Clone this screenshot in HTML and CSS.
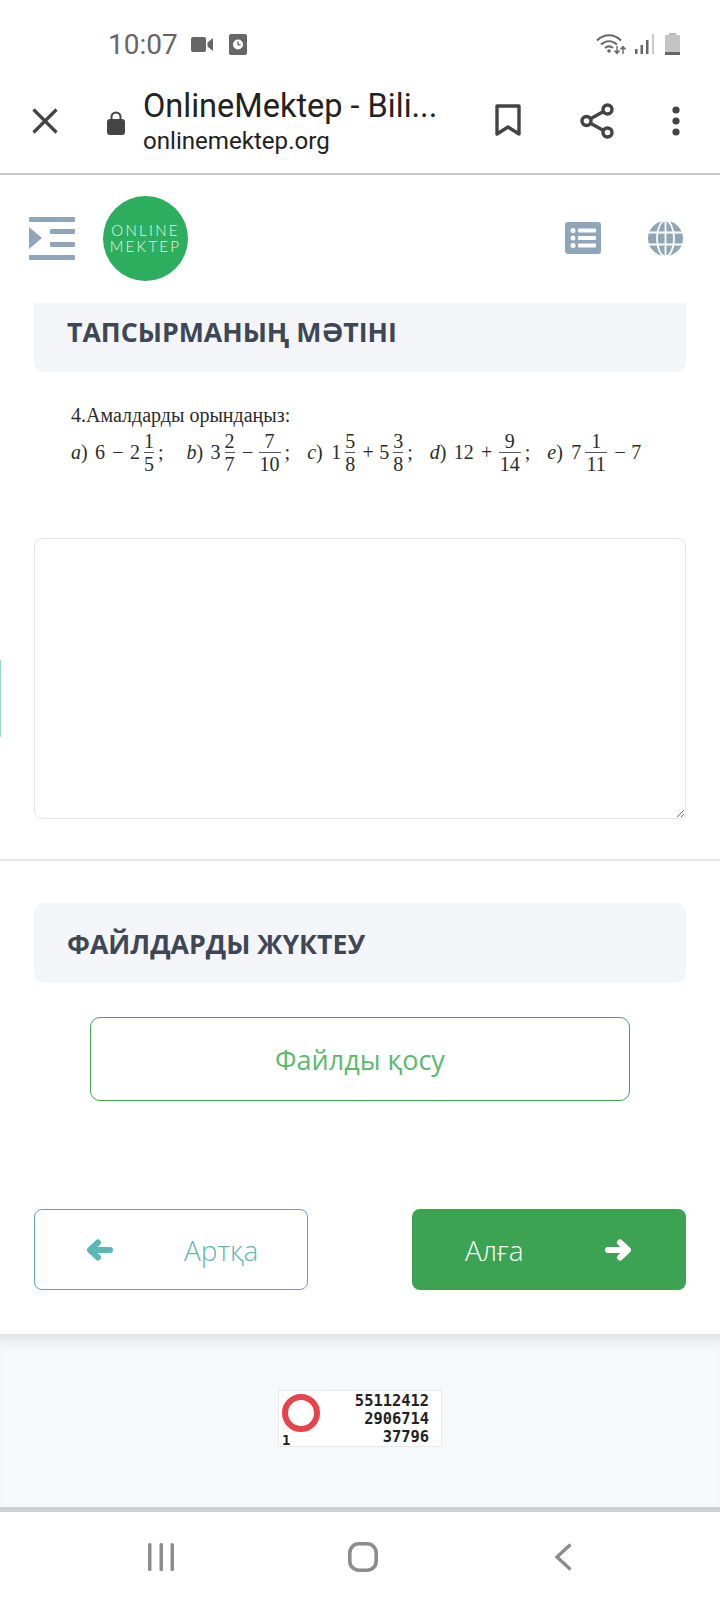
FILE: index.html
```html
<!DOCTYPE html>
<html lang="kk">
<head>
    <meta charset="UTF-8">
    <meta name="viewport" content="width=device-width, initial-scale=1.0">
    <title>OnlineMektep</title>
    <link rel="stylesheet" href="styles.css">
</head>
<body>
<div class="phone">

    <div class="status-bar">
        <div class="status-left">
            <span class="time">10:07</span>
            <svg class="ic-camera" width="22" height="15" viewBox="0 0 22 15"><rect x="0" y="0" width="15" height="15" rx="2" fill="#666"/><path d="M16.5 5.5 22 1v13l-5.500-4.500z" fill="#666"/></svg>
            <svg class="ic-clock" width="18" height="21" viewBox="0 0 18 21"><rect width="18" height="21" rx="2" fill="#666"/><circle cx="9" cy="10.500" r="5" fill="#fff"/><path d="M9 7.500v3.300h2.600" stroke="#666" stroke-width="1.300" fill="none"/></svg>
        </div>
        <div class="status-right">
            <svg width="31" height="22" viewBox="0 0 31 22" fill="none" stroke="#666"><path d="M1 7.500C8 .5 18 .5 25 7.500" stroke-width="2"/><path d="M5 11.500c5-4.500 11-4.500 16 0" stroke-width="2"/><path d="M9 15c2.800-2.300 5.200-2.300 8 0" stroke-width="2"/><circle cx="13" cy="18" r="1.800" fill="#666" stroke="none"/><path d="M21 13v7m-2.500-2.500 2.500 3 2.500-3M27 21v-7m-2.500 2.500 2.500-3 2.500 3" stroke-width="1.400"/></svg>
            <svg width="19" height="20" viewBox="0 0 19 20" fill="#666"><rect x="0" y="15" width="2.500" height="5"/><rect x="5.500" y="11" width="2.500" height="9"/><rect x="11" y="6" width="2.500" height="14"/><rect x="17" y="0" width="2" height="20" fill="#ccc"/></svg>
            <svg class="ic-battery" width="15" height="22" viewBox="0 0 15 22"><rect x="4" y="0" width="7" height="3" fill="#bbb"/><rect x="0" y="2" width="15" height="20" rx="1" fill="#c4c4c4"/><rect x="0" y="19" width="15" height="3" fill="#666"/></svg>
        </div>
    </div>

    <div class="toolbar">
        <svg class="tb-close" width="26" height="26" viewBox="0 0 26 26"><path d="M1.500 1.500l23 23m0-23l-23 23" stroke="#444" stroke-width="3.200" fill="none"/></svg>
        <svg class="tb-lock" width="18" height="24" viewBox="0 0 18 24"><path d="M4.500 9V6a4.500 4.500 0 0 1 9 0v3" stroke="#444" stroke-width="2" fill="none"/><rect y="8" width="18" height="16" rx="3" fill="#444"/></svg>
        <div class="tb-text">
            <div class="tb-title">OnlineMektep - Bili...</div>
            <div class="tb-url">onlinemektep.org</div>
        </div>
        <svg class="tb-bookmark" width="26" height="33" viewBox="0 0 26 33"><path d="M2 2h22v28l-11-7-11 7z" stroke="#444" stroke-width="3.400" fill="none" stroke-linejoin="round"/></svg>
        <svg class="tb-share" width="34" height="36" viewBox="0 0 34 36" fill="none" stroke="#444" stroke-width="3.400"><circle cx="27.500" cy="6.500" r="4.500"/><circle cx="6.500" cy="18" r="4.500"/><circle cx="27.500" cy="29.500" r="4.500"/><path d="M10.500 15.800l13-7.200M10.500 20.200l13 7.200"/></svg>
        <svg class="tb-more" width="10" height="30" viewBox="0 0 10 30" fill="#444"><circle cx="5" cy="4" r="3.600"/><circle cx="5" cy="15" r="3.600"/><circle cx="5" cy="26" r="3.600"/></svg>
    </div>

    <div class="app-header">
        <svg class="menu-icon" width="46" height="43" viewBox="0 0 46 43" fill="#8fa5ba"><rect width="46" height="5" rx="1"/><rect x="21" y="12" width="25" height="5" rx="1"/><rect x="21" y="25" width="25" height="5" rx="1"/><rect y="38" width="46" height="5" rx="1"/><path d="M0 10l13 11L0 32z"/></svg>
        <div class="logo"><span>ONLINE</span><span>MEKTEP</span></div>
        <div class="header-right">
            <svg width="36" height="32" viewBox="0 0 36 32"><rect width="36" height="32" rx="3" fill="#8fa5ba"/><g fill="#fff"><circle cx="8" cy="8.500" r="2.500"/><circle cx="8" cy="16" r="2.500"/><circle cx="8" cy="23.500" r="2.500"/><rect x="13" y="6.500" width="18" height="4" rx="1"/><rect x="13" y="14" width="18" height="4" rx="1"/><rect x="13" y="21.500" width="18" height="4" rx="1"/></g></svg>
            <svg width="35" height="35" viewBox="0 0 35 35"><circle cx="17.500" cy="17.500" r="17.500" fill="#8fa5ba"/><g fill="none" stroke="#fff" stroke-width="1.800"><ellipse cx="17.500" cy="17.500" rx="8.500" ry="18"/><path d="M17.500 0v35M0 11.500h35M0 23.500h35"/></g></svg>
        </div>
    </div>

    <div class="main">
        <div class="section-title first">ТАПСЫРМАНЫҢ МӘТІНІ</div>

        <div class="task">
            <div class="task-head">4.Амалдарды орындаңыз:</div>
            <div class="task-math">
                <span class="term term-a"><span class="lbl"><i>a</i>)</span><span>6</span><b class="op wide">−</b><span>2</span><span class="frac"><span>1</span><span>5</span></span>;</span>
                <span class="term"><span class="lbl"><i>b</i>)</span><span>3</span><span class="frac"><span>2</span><span>7</span></span><b class="op">−</b><span class="frac frac-w"><span>7</span><span>10</span></span>;</span>
                <span class="term"><span class="lbl"><i>c</i>)</span><span>1</span><span class="frac"><span>5</span><span>8</span></span><b class="op">+</b><span>5</span><span class="frac"><span>3</span><span>8</span></span>;</span>
                <span class="term"><span class="lbl"><i>d</i>)</span><span>12</span><b class="op wide">+</b><span class="frac frac-w"><span>9</span><span>14</span></span>;</span>
                <span class="term"><span class="lbl"><i>e</i>)</span><span>7</span><span class="frac frac-w"><span>1</span><span>11</span></span><b class="op">−</b><span>7</span></span>
            </div>
        </div>

        <textarea class="answer"></textarea>
        <hr class="divider">

        <div class="section-title">ФАЙЛДАРДЫ ЖҮКТЕУ</div>
        <button class="upload">Файлды қосу</button>

        <div class="nav-buttons">
            <button class="btn btn-back">
                <svg width="27" height="22" viewBox="0 0 27 22" fill="none" stroke="#5bb8b6" stroke-width="6" stroke-linecap="round" stroke-linejoin="round"><path d="M24 11H5M12 3.500L4 11l8 7.500"/></svg>
                <span>Артқа</span>
            </button>
            <button class="btn btn-next">
                <span>Алға</span>
                <svg width="28" height="22" viewBox="0 0 28 22" fill="none" stroke="#fff" stroke-width="6" stroke-linecap="round" stroke-linejoin="round"><path d="M3 11h19M15 3.500l8 7.500-8 7.500"/></svg>
            </button>
        </div>
    </div>

    <div class="footer">
        <div class="counter">
            <div class="counter-left">
                <span class="ring"></span>
                <span class="counter-one">1</span>
            </div>
            <div class="counter-nums">55112412<br>2906714<br>37796</div>
        </div>
    </div>

    <div class="bottom-nav">
        <svg width="26" height="28" viewBox="0 0 26 28" fill="#8c8c8c"><rect width="3.500" height="28" rx="1.500"/><rect x="11.500" width="3.500" height="28" rx="1.500"/><rect x="22.500" width="3.500" height="28" rx="1.500"/></svg>
        <svg class="nav-home" width="30" height="30" viewBox="0 0 30 30"><rect x="1.800" y="1.800" width="26.400" height="26.400" rx="9" fill="none" stroke="#8c8c8c" stroke-width="3.600"/></svg>
        <svg width="17" height="28" viewBox="0 0 17 28"><path d="M15.500 1.500L2 14l13.500 12.500" fill="none" stroke="#8c8c8c" stroke-width="3.400"/></svg>
    </div>

    <div class="side-tab"></div>
</div>
</body>
</html>
```

FILE: styles.css
```css
* {
    box-sizing: border-box;
}
body {
    margin: 0;
    background: #fff;
    font-family: "Open Sans", sans-serif;
}
.phone {
    position: relative;
    width: 720px;
    height: 1600px;
    display: flex;
    flex-direction: column;
    overflow: hidden;
    background: #fff;
}

/* status bar */
.status-bar {
    height: 78px;
    padding: 10px 40px 0 108px;
    display: flex;
    justify-content: space-between;
    align-items: center;
}
.status-left, .status-right {
    display: flex;
    align-items: center;
}
.status-right {
    gap: 8px;
}
.ic-battery {
    margin-left: 3px;
}
.time {
    font-family: Roboto, sans-serif;
    font-size: 28px;
    color: #666;
}
.ic-camera {
    margin-left: 13px;
}
.ic-clock {
    margin-left: 16px;
}

/* browser toolbar */
.toolbar {
    height: 97px;
    padding-bottom: 10px;
    display: flex;
    align-items: center;
    border-bottom: 2px solid #c9c9c9;
    font-family: Roboto, sans-serif;
    color: #222;
}
.tb-close {
    margin-left: 32px;
}
.tb-lock {
    margin-left: 49px;
    margin-top: 4px;
}
.tb-text {
    margin-left: 18px;
    width: 352px;
}
.tb-title {
    font-size: 32.500px;
    line-height: 40px;
}
.tb-url {
    font-size: 24.100px;
    line-height: 30px;
}
.tb-share {
    margin-left: 59px;
}
.tb-more {
    margin-left: 57px;
}

/* site header */
.app-header {
    height: 128px;
    padding: 0 37px 2px 29px;
    display: flex;
    align-items: center;
}
.menu-icon {
    margin-right: 28px;
}
.logo {
    width: 85px;
    height: 85px;
    border-radius: 50%;
    background: #2cae5e;
    color: #e8f7ee;
    display: flex;
    flex-direction: column;
    align-items: center;
    justify-content: center;
    font-family: Lato, sans-serif;
    font-weight: 300;
    font-size: 15px;
    line-height: 16px;
    letter-spacing: 2.300px;
}
.header-right {
    margin-left: auto;
    display: flex;
    align-items: center;
    gap: 47px;
}

/* main white panel */
.main {
    height: 1031px;
    padding: 0 34px;
    background: #fff;
}
.section-title {
    height: 80px;
    padding-left: 33px;
    display: flex;
    align-items: center;
    background: #f3f5f8;
    border-radius: 10px;
    font-size: 26.700px;
    font-weight: 700;
    color: #3d4756;
}
.section-title.first {
    height: 69px;
    padding-bottom: 13px;
    border-radius: 0 0 10px 10px;
    margin-bottom: 31px;
}

/* task text */
.task {
    height: 135px;
    padding-left: 37px;
    font-family: "Liberation Serif", serif;
    font-size: 20px;
    color: #2b2b2b;
}
.task-head {
    line-height: 24px;
    margin-bottom: 2px;
}
.task-math {
    display: flex;
    align-items: center;
    height: 46px;
}
.term {
    display: flex;
    align-items: center;
    margin-right: 17px;
}
.term-a {
    margin-right: 23px;
}
.lbl {
    width: 24px;
}
.op {
    width: 12px;
    text-align: center;
    font-weight: 400;
    margin: 0 5px 0 3px;
}
.op.wide {
    margin: 0 6px 0 7px;
}
.frac {
    display: inline-flex;
    flex-direction: column;
    align-items: center;
    width: 10px;
    margin: 0 4px;
    line-height: 22px;
}
.frac-w {
    width: 22px;
}
.op + .frac {
    margin-left: 0;
}
.frac span:first-child {
    border-bottom: 1px solid #555;
    width: 100%;
    text-align: center;
}

.answer {
    display: block;
    width: 100%;
    height: 281px;
    border: 1px solid #e3e6ea;
    border-radius: 8px;
    background: #fff;
}
.divider {
    margin: 40px -34px 0;
    border: 0;
    border-top: 2px solid #e3e5e7;
}
.divider + .section-title {
    margin-top: 42px;
}
.upload {
    display: block;
    width: 540px;
    height: 84px;
    margin: 34px auto 0;
    background: #fff;
    border: 1px solid #3ea555;
    border-radius: 10px;
    color: #5ab96f;
    font-family: "Open Sans", sans-serif;
    font-size: 27px;
}

/* back and next */
.nav-buttons {
    margin-top: 108px;
    display: flex;
    justify-content: space-between;
}
.btn {
    width: 274px;
    height: 81px;
    display: flex;
    align-items: center;
    border-radius: 8px;
    font-family: "Open Sans", sans-serif;
    font-size: 28px;
    font-weight: 300;
}
.btn-back {
    padding: 0 0 0 51px;
    gap: 71px;
    background: #fff;
    border: 1px solid #5aa9b0;
    color: #5fb5b5;
}
.btn-next {
    padding: 0 0 0 53px;
    gap: 81px;
    background: #3ca353;
    border: 0;
    color: #fff;
}

/* footer with counter */
.footer {
    height: 178px;
    padding-top: 56px;
    background: #f5f9fc;
    border-bottom: 5px solid #cdcfd1;
    box-shadow: inset 0 14px 14px -10px rgba(0, 0, 0, 0.12);
    display: flex;
    justify-content: center;
    align-items: flex-start;
}
.counter {
    width: 164px;
    height: 57px;
    padding: 1px 12px 1px 3px;
    display: flex;
    justify-content: space-between;
    background: #fff;
    border: 1px solid #e6e8ea;
}
.counter-left {
    width: 44px;
}
.ring {
    display: block;
    width: 38px;
    height: 38px;
    margin-top: 2px;
    border: 6px solid #e8434a;
    border-radius: 50%;
}
.counter-one, .counter-nums {
    font-family: "DejaVu Sans Mono", monospace;
    font-weight: 700;
    font-size: 15.400px;
    line-height: 18px;
    color: #222;
}
.counter-nums {
    text-align: right;
}
.counter-one {
    display: block;
    font-size: 14px;
    line-height: 14px;
    margin-top: 1px;
}

/* android nav */
.bottom-nav {
    flex: 1;
    padding: 2px 148px 0;
    display: flex;
    align-items: center;
    justify-content: space-between;
}
.nav-home {
    margin-right: 3px;
}

.side-tab {
    position: absolute;
    left: 0;
    top: 660px;
    width: 1px;
    height: 77px;
    background: #9ed8cc;
}
```
